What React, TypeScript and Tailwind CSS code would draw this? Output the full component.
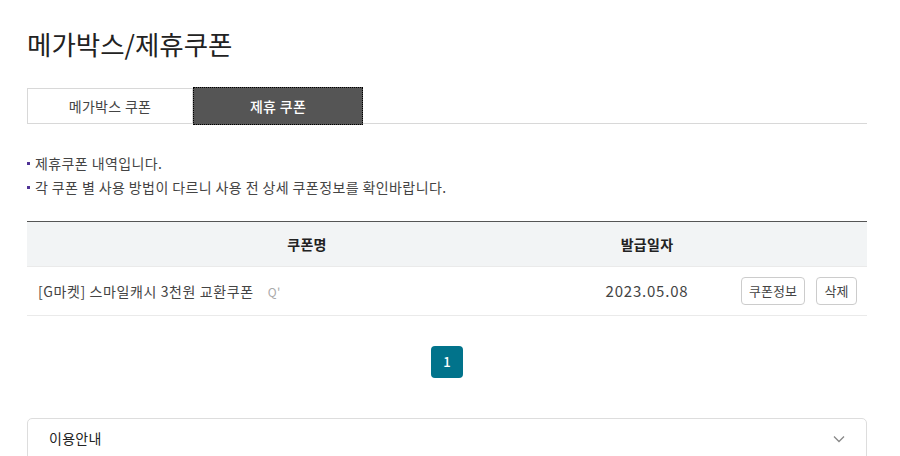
import React from "react";

export default function App() {
  return (
    <div className="w-[900px] h-[456px] overflow-hidden bg-white pl-[27px] pr-[33px] pt-[24px] text-[#444]" style={{ fontFamily: '"Noto Sans CJK KR", "Noto Sans", sans-serif' }}>
      <h2 className="text-[26.5px] leading-[40px] text-[#222]">메가박스/제휴쿠폰</h2>
      <div className="mt-[24px] flex h-[36px] border-b border-[#d8d8d8]">
        <button className="w-[166px] h-[36px] border border-[#d8d8d8] border-b-0 text-[14px] tracking-[0.3px] text-[#444]">메가박스 쿠폰</button>
        <button className="w-[170px] h-[38px] -mt-[1px] bg-[#555] text-white text-[14px] tracking-[0.3px] font-medium outline outline-1 outline-dotted outline-black -outline-offset-1">제휴 쿠폰</button>
      </div>
      <ul className="mt-[27px] text-[14px] tracking-[0.4px] leading-[24px] text-[#444]">
        <li className="flex items-center"><span className="w-[3px] h-[3px] bg-[#503396] mr-[5px]" />제휴쿠폰 내역입니다.</li>
        <li className="flex items-center"><span className="w-[3px] h-[3px] bg-[#503396] mr-[5px]" />각 쿠폰 별 사용 방법이 다르니 사용 전 상세 쿠폰정보를 확인바랍니다.</li>
      </ul>
      <table className="mt-[22px] w-full border-t border-[#555] text-[14px] tracking-[0.3px]">
        <colgroup>
          <col className="w-[560px]" />
          <col className="w-[120px]" />
          <col />
        </colgroup>
        <thead>
          <tr className="h-[45px] bg-[#f2f4f5] border-b border-[#eaeaea]">
            <th className="font-bold text-[#222]">쿠폰명</th>
            <th className="font-bold text-[#222]">발급일자</th>
            <th></th>
          </tr>
        </thead>
        <tbody>
          <tr className="h-[49px] border-b border-[#eaeaea]">
            <td className="pl-[11px] text-[#444]">
              <span className="tracking-[0.6px]">[G마켓] 스마일캐시 3천원 교환쿠폰</span>
              <span className="ml-[14px] text-[#aaa] text-[12px]">Q'</span>
            </td>
            <td className="text-center text-[#444] text-[15px] tracking-[0.8px]">2023.05.08</td>
            <td>
              <div className="flex justify-end gap-[11px] pr-[10px]">
                <button className="h-[28px] w-[64px] border border-[#ccc] rounded-[4px] text-[13px] tracking-[0px] text-[#444]">쿠폰정보</button>
                <button className="h-[28px] w-[41px] border border-[#ccc] rounded-[4px] text-[13px] tracking-[0px] text-[#444]">삭제</button>
              </div>
            </td>
          </tr>
        </tbody>
      </table>
      <div className="mt-[30px] flex justify-center">
        <button className="w-[32px] h-[32px] rounded-[4px] bg-[#01738b] text-white text-[13px] font-medium">1</button>
      </div>
      <div className="mt-[40px] h-[50px] border border-[#ddd] rounded-[5px] flex items-start justify-between px-[21px] pt-[9px]">
        <span className="text-[14px] tracking-[0.3px] text-[#222]">이용안내</span>
        <svg width="14" height="14" viewBox="0 0 14 14" className="mt-[4px] mr-[-1px]"><path d="M2 4.5 L7 9.5 L12 4.5" fill="none" stroke="#888" strokeWidth="1.3" /></svg>
      </div>
    </div>
  );
}
